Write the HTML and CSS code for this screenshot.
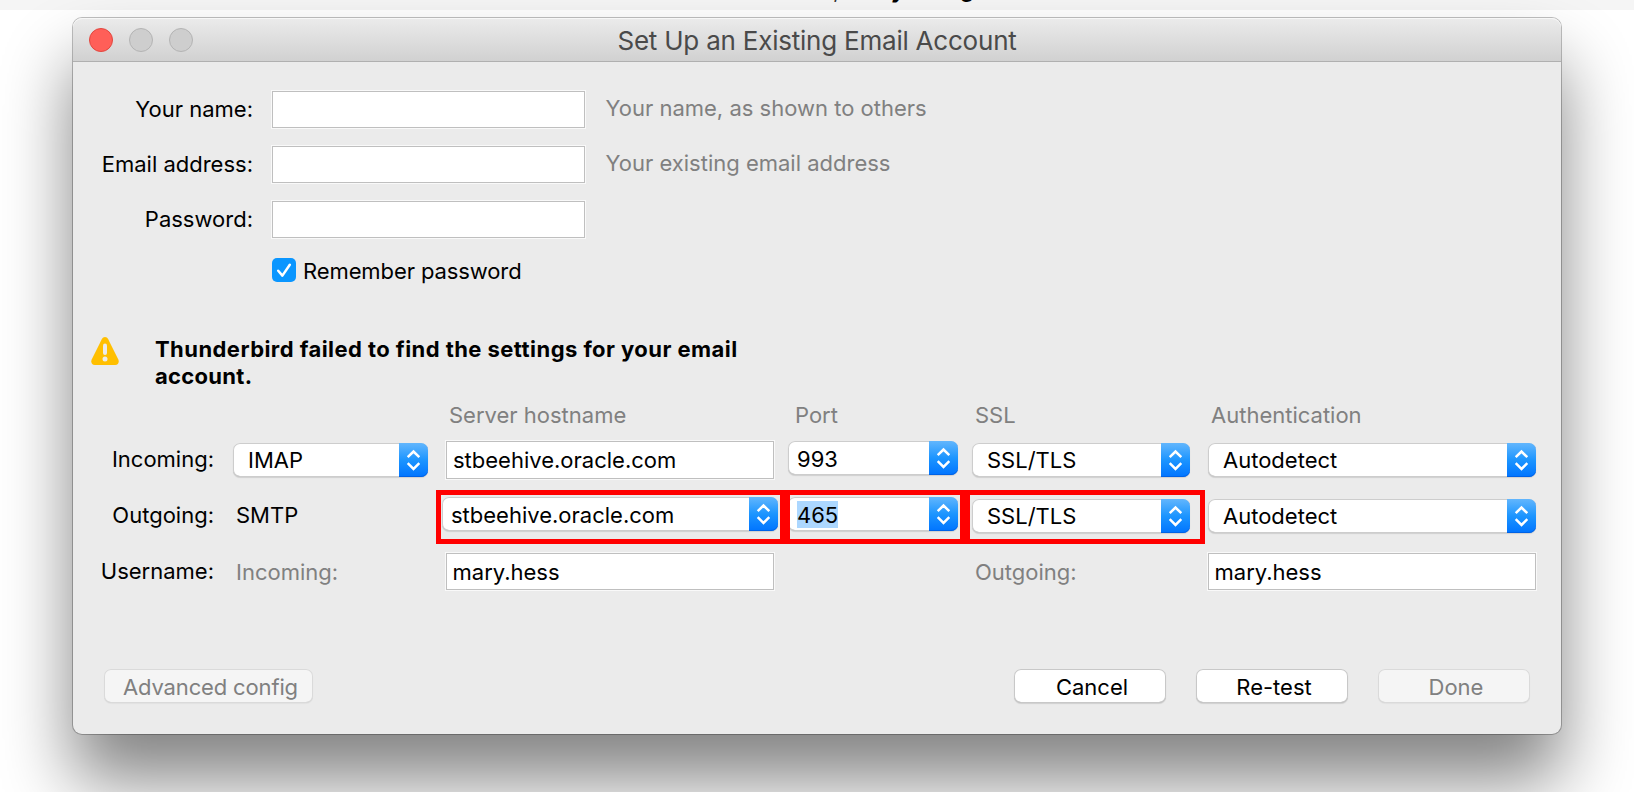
FILE: index.html
```
<!DOCTYPE html>
<html lang="en">
<head>
<meta charset="utf-8">
<title>Set Up an Existing Email Account</title>
<link rel="stylesheet" href="styles.css">
</head>
<body>
<svg class="defs" width="0" height="0" aria-hidden="true">
  <symbol id="updown" viewBox="0 0 29 34">
    <path d="M8.7 14.2 14.5 8.5 20.3 14.2M8.7 20.2 14.5 25.9 20.3 20.2" fill="none" stroke="#fff" stroke-width="2.5"/>
  </symbol>
</svg>
<div class="backdrop"><span class="frag-comma">,</span><span class="frag-y">y</span><span class="frag-g">g</span></div>
<main class="window">
  <header class="titlebar">
    <div class="lights"><i class="light close"></i><i class="light"></i><i class="light"></i></div>
    <h1 class="title">Set Up an Existing Email Account</h1>
  </header>

  <section class="identity">
    <label class="label">Your name:</label><div class="field"></div><span class="hint">Your name, as shown to others</span>
    <label class="label">Email address:</label><div class="field"></div><span class="hint">Your existing email address</span>
    <label class="label">Password:</label><div class="field"></div><span></span>
    <div class="remember">
      <span class="checkbox"><svg width="24" height="24" viewBox="0 0 24 24"><path d="M6.2 12.8 10.4 17.6 17.8 6.8" fill="none" stroke="#fff" stroke-width="2.5" stroke-linecap="round" stroke-linejoin="round"/></svg></span>
      <span class="remember-text">Remember password</span>
    </div>
  </section>

  <section class="status">
    <svg class="warning" width="28" height="28" viewBox="0 0 28 28">
      <path d="M14 0C12.7 0 11.5.8 10.9 2L.7 22.6C-.5 25.2.9 28 3.700 28H24.300C27.100 28 28.500 25.200 27.300 22.600L17.100 2C16.500.8 15.300 0 14 0Z" fill="#ffbf00"/>
      <rect x="12" y="6.500" width="4" height="11.500" rx="2" fill="#ebebeb"/>
      <circle cx="14" cy="22" r="2.500" fill="#ebebeb"/>
    </svg>
    <p class="message">Thunderbird failed to find the settings for your email <span class="message-end">account.</span></p>
  </section>

  <section class="servers">
    <div class="grid headings">
      <span></span><span></span><span class="head">Server hostname</span><span class="head">Port</span><span class="head">SSL</span><span class="head">Authentication</span>
    </div>
    <div class="grid rows">
      <span class="row-label">Incoming:</span>
      <div class="select protocol"><span>IMAP</span><svg class="arrows"><use href="#updown"/></svg></div>
      <div class="field host">stbeehive.oracle.com</div>
      <div class="select combo"><span>993</span><svg class="arrows"><use href="#updown"/></svg></div>
      <div class="select ssl"><span>SSL/TLS</span><svg class="arrows"><use href="#updown"/></svg></div>
      <div class="select"><span>Autodetect</span><svg class="arrows"><use href="#updown"/></svg></div>

      <span class="row-label">Outgoing:</span>
      <span class="text">SMTP</span>
      <div class="select combo wide"><span>stbeehive.oracle.com</span><svg class="arrows"><use href="#updown"/></svg></div>
      <div class="select combo"><span><mark class="selected">465</mark></span><svg class="arrows"><use href="#updown"/></svg></div>
      <div class="select ssl"><span>SSL/TLS</span><svg class="arrows"><use href="#updown"/></svg></div>
      <div class="select"><span>Autodetect</span><svg class="arrows"><use href="#updown"/></svg></div>

      <span class="row-label">Username:</span>
      <span class="text muted">Incoming:</span>
      <div class="field user">mary.hess</div>
      <span></span>
      <span class="text muted">Outgoing:</span>
      <div class="field user">mary.hess</div>

      <div class="callouts"><i class="callout host-box"></i><i class="callout port-box"></i><i class="callout ssl-box"></i></div>
    </div>
  </section>

  <footer class="actions">
    <button class="button disabled advanced" disabled>Advanced config</button>
    <button class="button">Cancel</button>
    <button class="button">Re-test</button>
    <button class="button disabled" disabled>Done</button>
  </footer>
</main>
</body>
</html>
```
FILE: styles.css
```
* { box-sizing: border-box; }

html, body { height: 100%; }

body {
  margin: 0;
  overflow: hidden;
  background: #fff;
  color: #000;
  font: 22px/36px Inter, "Liberation Sans", sans-serif;
}

.defs { position: absolute; }

.backdrop {
  position: relative;
  height: 10px;
  overflow: hidden;
  background: #f5f5f5;
  line-height: 26px;
}
.backdrop span { position: absolute; top: -23px; }
.frag-comma { left: 833px; color: #333; }
.backdrop .frag-y { left: 891px; font-weight: 700; }
.backdrop .frag-g { left: 960px; top: -24px; font-weight: 700; }

.window {
  position: relative;
  width: 1488px;
  height: 716px;
  margin: 8px 0 0 73px;
  border-radius: 9px;
  background: #ebebeb;
  box-shadow: 0 0 0 1px rgba(0, 0, 0, .25), 0 46px 70px rgba(0, 0, 0, .49);
}

.titlebar {
  display: grid;
  grid-template-columns: 200px 1fr 200px;
  height: 44px;
  border-bottom: 1px solid #b0b0b0;
  border-radius: 9px 9px 0 0;
  background: linear-gradient(#ebebeb, #d1d1d1);
  box-shadow: inset 0 1px 0 #f7f7f7;
}
.lights { display: flex; gap: 16px; padding: 10px 0 0 16px; }
.light {
  width: 24px;
  height: 24px;
  border: 1px solid #b4b4b4;
  border-radius: 50%;
  background: #cecece;
}
.light.close { border-color: #e2473f; background: #ff5f58; }
.title {
  margin: 0;
  color: #4a4a4a;
  font-size: 26px;
  font-weight: 400;
  line-height: 45px;
  letter-spacing: -.22px;
  text-align: center;
}

.identity {
  display: grid;
  grid-template-columns: 181px 313px 1fr;
  grid-template-rows: 37px 37px 37px 28px;
  row-gap: 18px;
  column-gap: 18px;
  padding-top: 29px;
}
.label { padding-right: 1px; line-height: 37px; text-align: right; }
.hint { padding-left: 2.500px; color: #808080; line-height: 35px; }

.field {
  height: 37px;
  border: 1px solid #bfbfbf;
  background: #fff;
  box-shadow: 0 0 0 1px #f9f9f9;
}

.remember {
  display: flex;
  grid-column: 2;
  align-items: center;
  gap: 7px;
  line-height: 28px;
}
.remember-text { padding-top: 2px; letter-spacing: -.1px; }
.checkbox {
  width: 24px;
  height: 24px;
  border-radius: 5px;
  background: #0a96ff;
}
.checkbox svg { display: block; }

.status { display: flex; gap: 36px; margin-top: 52px; padding-left: 18px; }
.warning { flex: none; margin-top: 1px; }
.message {
  width: 600px;
  margin: 0;
  font-weight: 700;
  line-height: 26.500px;
  letter-spacing: .44px;
}
.message-end { letter-spacing: .3px; }

.grid {
  display: grid;
  grid-template-columns: 146px 199px 328px 170px 222px 328px;
  column-gap: 14px;
}
.headings { margin-top: 8px; }
.head { padding-left: 3px; color: #808080; line-height: 36px; }
.head:nth-child(4) { padding-left: 7px; }

.rows {
  position: relative;
  grid-template-rows: 38px 38px 38px;
  row-gap: 18px;
  align-items: start;
  margin-top: 8px;
}
.row-label { padding-right: 5px; text-align: right; }
.text { padding-left: 3px; }
.muted { color: #808080; line-height: 38px; }
.rows .field { padding-left: 6px; line-height: 36px; }
.rows .field.user { padding-left: 5.500px; }
.field.host { height: 38px; }

.select {
  display: flex;
  justify-content: space-between;
  height: 34px;
  margin-top: 2px;
  padding-left: 15px;
  border-radius: 7px;
  background: #fff;
  box-shadow: inset 0 0 0 1px #cdcdcd, inset 0 -1px 0 #aaa, 0 1px 1px rgba(0, 0, 0, .12);
  line-height: 35px;
}
.protocol { width: 195px; }
.ssl { width: 218px; }
.combo { margin-top: 0; padding-left: 9px; line-height: 36px; }
.wide { width: 336px; margin-left: -4px; }
.arrows {
  width: 29px;
  height: 34px;
  border-radius: 0 7px 7px 0;
  background: linear-gradient(#62b6fd, #1c95ff 50%, #0074ff);
  box-shadow: inset 0 -1px 0 #0062e6;
}
.selected {
  display: block;
  height: 27px;
  margin-top: 4px;
  background: #acd7ff;
  color: #000;
  line-height: 28px;
}

.callouts { position: absolute; top: 49px; left: 363px; display: flex; }
.callout { height: 54px; border: 5px solid #f00; }
.host-box { width: 349px; }
.port-box { width: 180px; }
.ssl-box { width: 240px; }

.actions {
  display: flex;
  gap: 30px;
  margin-top: 78px;
  padding: 0 31px;
}
.button {
  width: 152px;
  height: 34px;
  padding: 2px 0 0 4px;
  border: 0;
  border-radius: 7px;
  background: #fff;
  box-shadow: inset 0 0 0 1px #c8c8c8, inset 0 -1px 0 #a8a8a8, 0 1px 1px rgba(0, 0, 0, .12);
  color: #000;
  font: inherit;
  line-height: 33px;
}
.button.disabled {
  background: #f5f5f5;
  box-shadow: inset 0 0 0 1px #dadada, inset 0 -1px 0 #ccc, 0 1px 1px rgba(0, 0, 0, .04);
  color: #808080;
}
.button.advanced { width: 209px; margin-right: auto; letter-spacing: -.15px; }
```
